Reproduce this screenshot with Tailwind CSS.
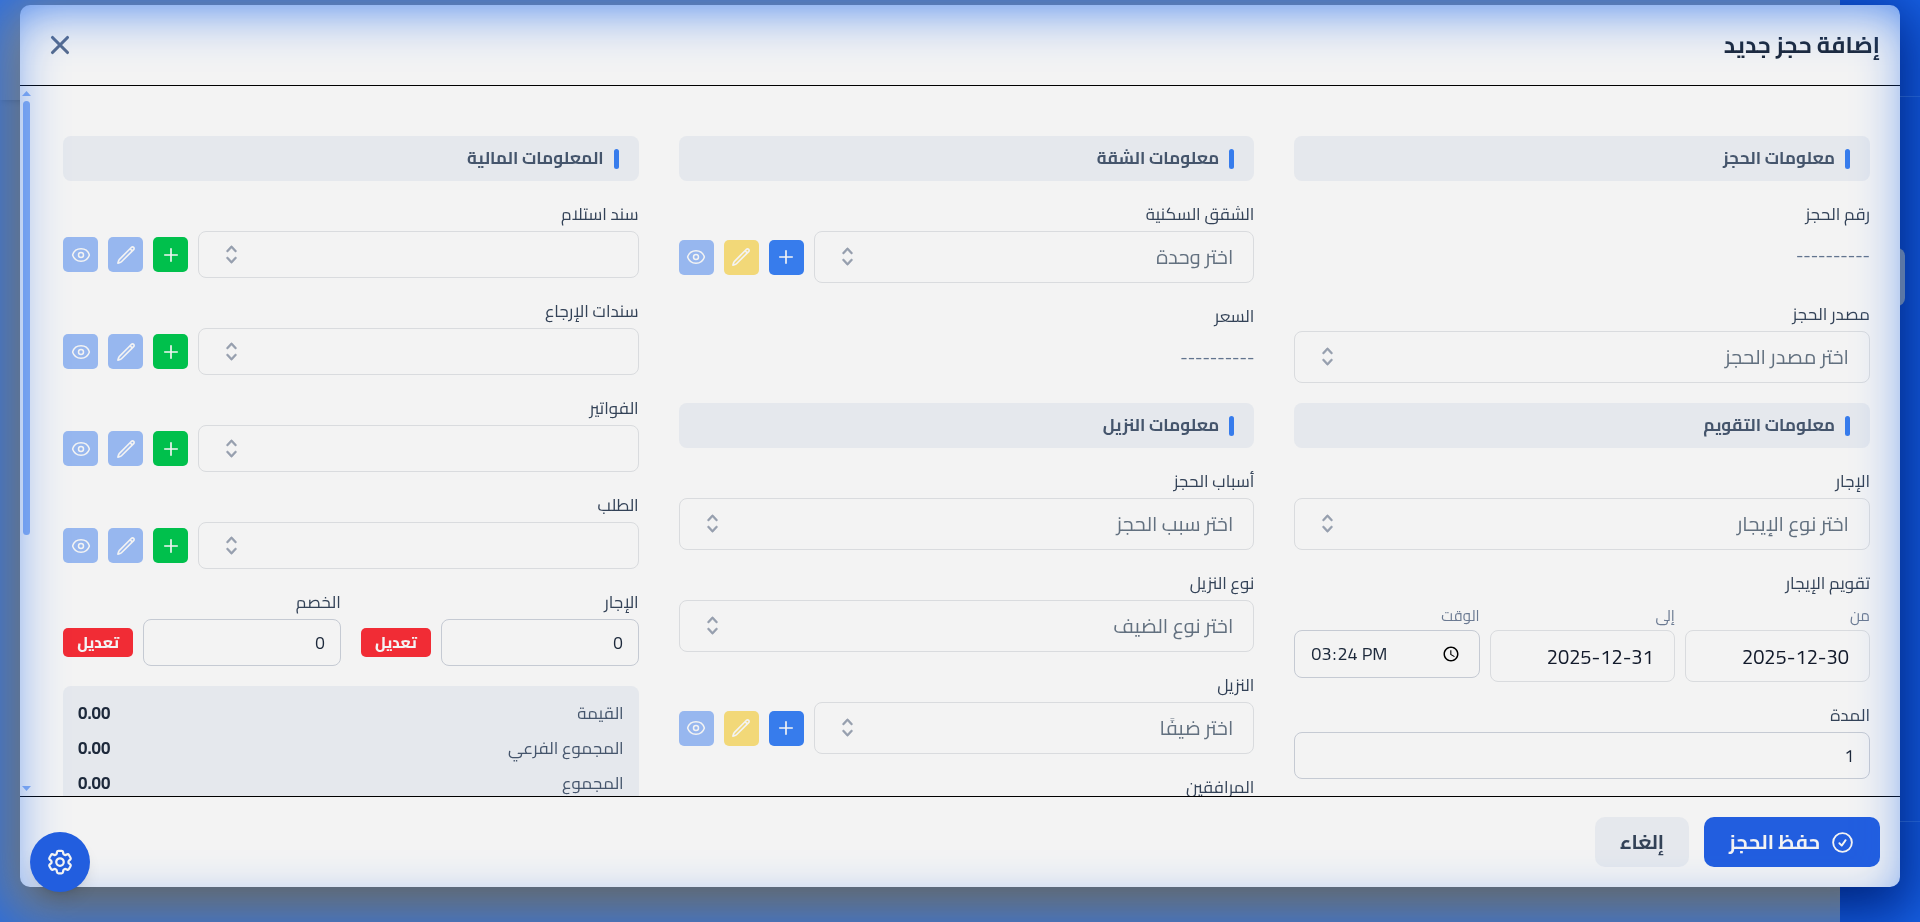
<!DOCTYPE html>
<html lang="ar" dir="rtl">
<head>
  <meta charset="UTF-8" />
  <meta name="viewport" content="width=device-width, initial-scale=1.0" />
  <title>إضافة حجز جديد</title>
  <script src="https://cdn.jsdelivr.net/npm/@tailwindcss/browser@4"></script>
</head>
<body class="bg-[#7b8082] font-['Cairo','Noto_Sans',sans-serif] text-[17px] text-[#1d293b] min-h-screen overflow-hidden">

  <!-- Icons -->
  <svg class="hidden">
    <symbol id="plus" viewBox="0 0 24 24" fill="none" stroke="currentColor" stroke-width="2" stroke-linecap="round" stroke-linejoin="round">
      <path d="M12 4.5v15m7.5-7.5h-15" />
    </symbol>
    <symbol id="pencil" viewBox="0 0 24 24" fill="none" stroke="currentColor" stroke-width="2" stroke-linecap="round" stroke-linejoin="round">
      <path d="m16.862 4.487 1.687-1.688a1.875 1.875 0 1 1 2.652 2.652L6.832 19.82a4.5 4.5 0 0 1-1.897 1.13l-2.685.8.8-2.685a4.5 4.5 0 0 1 1.13-1.897L16.863 4.487Zm0 0L19.5 7.125" />
    </symbol>
    <symbol id="eye" viewBox="0 0 24 24" fill="none" stroke="currentColor" stroke-width="1.8" stroke-linecap="round" stroke-linejoin="round">
      <path d="M2.036 12.322a1.012 1.012 0 0 1 0-.639C3.423 7.51 7.36 4.5 12 4.5c4.638 0 8.573 3.007 9.963 7.178.07.207.07.431 0 .639C20.577 16.49 16.64 19.5 12 19.5c-4.638 0-8.573-3.007-9.963-7.178Z" />
      <path d="M15 12a3 3 0 1 1-6 0 3 3 0 0 1 6 0Z" />
    </symbol>
    <symbol id="chevrons" viewBox="0 0 20 20" fill="currentColor" stroke="currentColor" stroke-width="0.4">
      <path d="M10 3a.75.75 0 0 1 .55.24l3.25 3.5a.75.75 0 1 1-1.1 1.02L10 4.852 7.3 7.76a.75.75 0 0 1-1.1-1.02l3.25-3.5A.75.75 0 0 1 10 3Zm-3.76 9.2a.75.75 0 0 1 1.06.04l2.7 2.908 2.7-2.908a.75.75 0 1 1 1.1 1.02l-3.25 3.5a.75.75 0 0 1-1.1 0l-3.25-3.5a.75.75 0 0 1 .04-1.06Z" />
    </symbol>
  </svg>

  <!-- Page behind the dialog -->
  <div class="fixed inset-0 flex">
    <div class="w-20 bg-[#02309c] flex flex-col justify-between">
      <div class="h-[97px] border-b border-[#2450a8]"></div>
      <div class="h-[101px] border-t border-[#2450a8]"></div>
    </div>
    <div class="flex-1">
      <div class="h-[100px] bg-[#858a8c] shadow-md"></div>
    </div>
  </div>
  <div class="fixed right-[15px] top-[248px] w-10 h-[58px] rounded-lg bg-[#7d8794]"></div>

  <!-- Dialog -->
  <div role="dialog" aria-labelledby="dialogTitle" class="fixed inset-x-5 top-[5px] bottom-[35px] flex flex-col rounded-[10px] bg-[#f3f3f3] shadow-2xl overflow-hidden">

    <div class="h-[81px] shrink-0 flex items-center justify-between px-5 border-b border-black">
      <h2 id="dialogTitle" class="text-[23px] font-bold">إضافة حجز جديد</h2>
      <button aria-label="إغلاق" class="p-[5px] text-[#576b8c]">
        <svg class="size-[30px]" viewBox="0 0 24 24" fill="none" stroke="currentColor" stroke-width="2.5" stroke-linecap="round"><path d="M6 18 18 6M6 6l12 12" /></svg>
      </button>
    </div>

    <div class="flex-1 min-h-0 flex">
      <div class="flex-1 grid grid-cols-3 gap-10 px-[30px] pt-[50px] overflow-hidden">

        <!-- Booking -->
        <div class="flex flex-col gap-5">
          <h3 class="h-[45px] shrink-0 flex items-center gap-[10px] px-5 rounded-lg bg-[#e5e8ed] font-bold text-[#45556c]"><span class="w-[5px] h-5 rounded-full bg-[#377cec]"></span>معلومات الحجز</h3>
          <div>
            <div class="leading-[26px] mb-1 text-[#334257]">رقم الحجز</div>
            <div class="h-[50px] flex items-center text-[#62748e]">----------</div>
          </div>
          <div>
            <label for="source" class="block leading-[26px] mb-1 text-[#334257]">مصدر الحجز</label>
            <div class="relative">
              <select id="source" class="block w-full h-[52px] px-5 appearance-none rounded-lg border border-[#d9dbde] text-xl text-[#62707f]"><option>اختر مصدر الحجز</option></select>
              <svg class="absolute left-[21px] top-[13px] size-[25px] text-[#969fae] pointer-events-none"><use href="#chevrons" /></svg>
            </div>
          </div>

          <h3 class="h-[45px] shrink-0 flex items-center gap-[10px] px-5 rounded-lg bg-[#e5e8ed] font-bold text-[#45556c]"><span class="w-[5px] h-5 rounded-full bg-[#377cec]"></span>معلومات التقويم</h3>
          <div>
            <label for="rentType" class="block leading-[26px] mb-1 text-[#334257]">الإجار</label>
            <div class="relative">
              <select id="rentType" class="block w-full h-[52px] px-5 appearance-none rounded-lg border border-[#d9dbde] text-xl text-[#62707f]"><option>اختر نوع الإيجار</option></select>
              <svg class="absolute left-[21px] top-[13px] size-[25px] text-[#969fae] pointer-events-none"><use href="#chevrons" /></svg>
            </div>
          </div>
          <div>
            <div class="leading-[26px] mb-2 text-[#334257]">تقويم الإيجار</div>
            <div class="grid grid-cols-3 gap-[10px] items-start">
              <div>
                <label for="from" class="block mb-[2px] text-[15px] leading-6 text-[#6b7a92]">من</label>
                <input id="from" type="text" value="2025-12-30" class="block w-full h-[52px] px-5 rounded-lg border border-[#d9dbde] text-xl text-[#121a2b]" />
              </div>
              <div>
                <label for="to" class="block mb-[2px] text-[15px] leading-6 text-[#6b7a92]">إلى</label>
                <input id="to" type="text" value="2025-12-31" class="block w-full h-[52px] px-5 rounded-lg border border-[#d9dbde] text-xl text-[#121a2b]" />
              </div>
              <div>
                <label for="time" class="block mb-[2px] text-[15px] leading-6 text-[#6b7a92]">الوقت</label>
                <input id="time" type="time" value="15:24" class="block w-full h-12 px-[15px] rounded-lg border border-[#c5cad3] text-lg" />
              </div>
            </div>
          </div>
          <div>
            <label for="duration" class="block leading-[26px] mb-1 text-[#334257]">المدة</label>
            <input id="duration" type="text" value="1" class="block w-full h-[47px] px-[15px] rounded-lg border border-[#c5cad3]" />
          </div>
        </div>

        <!-- Apartment and guest -->
        <div class="flex flex-col gap-5">
          <h3 class="h-[45px] shrink-0 flex items-center gap-[10px] px-5 rounded-lg bg-[#e5e8ed] font-bold text-[#45556c]"><span class="w-[5px] h-5 rounded-full bg-[#377cec]"></span>معلومات الشقة</h3>
          <div>
            <label for="unit" class="block leading-[26px] mb-1 text-[#334257]">الشقق السكنية</label>
            <div class="flex items-center gap-[10px]">
              <div class="relative flex-1">
                <select id="unit" class="block w-full h-[52px] px-5 appearance-none rounded-lg border border-[#d9dbde] text-xl text-[#62707f]"><option>اختر وحدة</option></select>
                <svg class="absolute left-[21px] top-[13px] size-[25px] text-[#969fae] pointer-events-none"><use href="#chevrons" /></svg>
              </div>
              <button aria-label="إضافة" class="size-[35px] grid place-items-center rounded-[5px] bg-[#377cec] text-[#f3f3f3]"><svg class="size-5"><use href="#plus" /></svg></button>
              <button aria-label="تعديل" class="size-[35px] grid place-items-center rounded-[5px] bg-[#f2d878] text-[#f3f3f3]"><svg class="size-5"><use href="#pencil" /></svg></button>
              <button aria-label="عرض" class="size-[35px] grid place-items-center rounded-[5px] bg-[#97b7ef] text-[#f3f3f3]"><svg class="size-5"><use href="#eye" /></svg></button>
            </div>
          </div>
          <div>
            <div class="leading-[26px] mb-1 text-[#334257]">السعر</div>
            <div class="h-[50px] flex items-center text-[#62748e]">----------</div>
          </div>

          <h3 class="h-[45px] shrink-0 flex items-center gap-[10px] px-5 rounded-lg bg-[#e5e8ed] font-bold text-[#45556c]"><span class="w-[5px] h-5 rounded-full bg-[#377cec]"></span>معلومات النزيل</h3>
          <div>
            <label for="reason" class="block leading-[26px] mb-1 text-[#334257]">أسباب الحجز</label>
            <div class="relative">
              <select id="reason" class="block w-full h-[52px] px-5 appearance-none rounded-lg border border-[#d9dbde] text-xl text-[#62707f]"><option>اختر سبب الحجز</option></select>
              <svg class="absolute left-[21px] top-[13px] size-[25px] text-[#969fae] pointer-events-none"><use href="#chevrons" /></svg>
            </div>
          </div>
          <div>
            <label for="guestType" class="block leading-[26px] mb-1 text-[#334257]">نوع النزيل</label>
            <div class="relative">
              <select id="guestType" class="block w-full h-[52px] px-5 appearance-none rounded-lg border border-[#d9dbde] text-xl text-[#62707f]"><option>اختر نوع الضيف</option></select>
              <svg class="absolute left-[21px] top-[13px] size-[25px] text-[#969fae] pointer-events-none"><use href="#chevrons" /></svg>
            </div>
          </div>
          <div>
            <label for="guest" class="block leading-[26px] mb-1 text-[#334257]">النزيل</label>
            <div class="flex items-center gap-[10px]">
              <div class="relative flex-1">
                <select id="guest" class="block w-full h-[52px] px-5 appearance-none rounded-lg border border-[#d9dbde] text-xl text-[#62707f]"><option>اختر ضيفًا</option></select>
                <svg class="absolute left-[21px] top-[13px] size-[25px] text-[#969fae] pointer-events-none"><use href="#chevrons" /></svg>
              </div>
              <button aria-label="إضافة" class="size-[35px] grid place-items-center rounded-[5px] bg-[#377cec] text-[#f3f3f3]"><svg class="size-5"><use href="#plus" /></svg></button>
              <button aria-label="تعديل" class="size-[35px] grid place-items-center rounded-[5px] bg-[#f2d878] text-[#f3f3f3]"><svg class="size-5"><use href="#pencil" /></svg></button>
              <button aria-label="عرض" class="size-[35px] grid place-items-center rounded-[5px] bg-[#97b7ef] text-[#f3f3f3]"><svg class="size-5"><use href="#eye" /></svg></button>
            </div>
          </div>
          <div class="leading-[26px] text-[#334257]">المرافقين</div>
        </div>

        <!-- Finance -->
        <div class="flex flex-col gap-5">
          <h3 class="h-[45px] shrink-0 flex items-center gap-[10px] px-5 rounded-lg bg-[#e5e8ed] font-bold text-[#45556c]"><span class="w-[5px] h-5 rounded-full bg-[#377cec]"></span>المعلومات المالية</h3>
          <div>
            <label for="receipt" class="block leading-[26px] mb-1 text-[#334257]">سند استلام</label>
            <div class="flex items-center gap-[10px]">
              <div class="relative flex-1">
                <select id="receipt" class="block w-full h-[47px] px-5 appearance-none rounded-lg border border-[#d9dbde]"><option></option></select>
                <svg class="absolute left-[21px] top-[11px] size-[25px] text-[#969fae] pointer-events-none"><use href="#chevrons" /></svg>
              </div>
              <button aria-label="إضافة" class="size-[35px] grid place-items-center rounded-[5px] bg-[#00c04c] text-[#f3f3f3]"><svg class="size-5"><use href="#plus" /></svg></button>
              <button aria-label="تعديل" class="size-[35px] grid place-items-center rounded-[5px] bg-[#97b7ef] text-[#f3f3f3]"><svg class="size-5"><use href="#pencil" /></svg></button>
              <button aria-label="عرض" class="size-[35px] grid place-items-center rounded-[5px] bg-[#97b7ef] text-[#f3f3f3]"><svg class="size-5"><use href="#eye" /></svg></button>
            </div>
          </div>
          <div>
            <label for="refund" class="block leading-[26px] mb-1 text-[#334257]">سندات الإرجاع</label>
            <div class="flex items-center gap-[10px]">
              <div class="relative flex-1">
                <select id="refund" class="block w-full h-[47px] px-5 appearance-none rounded-lg border border-[#d9dbde]"><option></option></select>
                <svg class="absolute left-[21px] top-[11px] size-[25px] text-[#969fae] pointer-events-none"><use href="#chevrons" /></svg>
              </div>
              <button aria-label="إضافة" class="size-[35px] grid place-items-center rounded-[5px] bg-[#00c04c] text-[#f3f3f3]"><svg class="size-5"><use href="#plus" /></svg></button>
              <button aria-label="تعديل" class="size-[35px] grid place-items-center rounded-[5px] bg-[#97b7ef] text-[#f3f3f3]"><svg class="size-5"><use href="#pencil" /></svg></button>
              <button aria-label="عرض" class="size-[35px] grid place-items-center rounded-[5px] bg-[#97b7ef] text-[#f3f3f3]"><svg class="size-5"><use href="#eye" /></svg></button>
            </div>
          </div>
          <div>
            <label for="invoices" class="block leading-[26px] mb-1 text-[#334257]">الفواتير</label>
            <div class="flex items-center gap-[10px]">
              <div class="relative flex-1">
                <select id="invoices" class="block w-full h-[47px] px-5 appearance-none rounded-lg border border-[#d9dbde]"><option></option></select>
                <svg class="absolute left-[21px] top-[11px] size-[25px] text-[#969fae] pointer-events-none"><use href="#chevrons" /></svg>
              </div>
              <button aria-label="إضافة" class="size-[35px] grid place-items-center rounded-[5px] bg-[#00c04c] text-[#f3f3f3]"><svg class="size-5"><use href="#plus" /></svg></button>
              <button aria-label="تعديل" class="size-[35px] grid place-items-center rounded-[5px] bg-[#97b7ef] text-[#f3f3f3]"><svg class="size-5"><use href="#pencil" /></svg></button>
              <button aria-label="عرض" class="size-[35px] grid place-items-center rounded-[5px] bg-[#97b7ef] text-[#f3f3f3]"><svg class="size-5"><use href="#eye" /></svg></button>
            </div>
          </div>
          <div>
            <label for="order" class="block leading-[26px] mb-1 text-[#334257]">الطلب</label>
            <div class="flex items-center gap-[10px]">
              <div class="relative flex-1">
                <select id="order" class="block w-full h-[47px] px-5 appearance-none rounded-lg border border-[#d9dbde]"><option></option></select>
                <svg class="absolute left-[21px] top-[11px] size-[25px] text-[#969fae] pointer-events-none"><use href="#chevrons" /></svg>
              </div>
              <button aria-label="إضافة" class="size-[35px] grid place-items-center rounded-[5px] bg-[#00c04c] text-[#f3f3f3]"><svg class="size-5"><use href="#plus" /></svg></button>
              <button aria-label="تعديل" class="size-[35px] grid place-items-center rounded-[5px] bg-[#97b7ef] text-[#f3f3f3]"><svg class="size-5"><use href="#pencil" /></svg></button>
              <button aria-label="عرض" class="size-[35px] grid place-items-center rounded-[5px] bg-[#97b7ef] text-[#f3f3f3]"><svg class="size-5"><use href="#eye" /></svg></button>
            </div>
          </div>

          <div class="grid grid-cols-2 gap-5">
            <div>
              <label for="rent" class="block leading-[26px] mb-1 text-[#334257]">الإجار</label>
              <div class="flex items-center gap-[10px]">
                <input id="rent" type="text" value="0" class="flex-1 min-w-0 h-[47px] px-[15px] rounded-lg border border-[#c5cad3]" />
                <button class="w-[70px] h-[29px] rounded-[5px] bg-[#f12c35] text-[#f3f3f3] text-[15px] leading-6 font-extrabold">تعديل</button>
              </div>
            </div>
            <div>
              <label for="discount" class="block leading-[26px] mb-1 text-[#334257]">الخصم</label>
              <div class="flex items-center gap-[10px]">
                <input id="discount" type="text" value="0" class="flex-1 min-w-0 h-[47px] px-[15px] rounded-lg border border-[#c5cad3]" />
                <button class="w-[70px] h-[29px] rounded-[5px] bg-[#f12c35] text-[#f3f3f3] text-[15px] leading-6 font-extrabold">تعديل</button>
              </div>
            </div>
          </div>

          <dl class="flex flex-col gap-[10px] p-[15px] rounded-lg bg-[#e5e8ed] leading-[25px]">
            <div class="flex justify-between"><dt class="text-[#45556c]">القيمة</dt><dd class="font-bold">0.00</dd></div>
            <div class="flex justify-between"><dt class="text-[#45556c]">المجموع الفرعي</dt><dd class="font-bold">0.00</dd></div>
            <div class="flex justify-between"><dt class="text-[#45556c]">المجموع</dt><dd class="font-bold">0.00</dd></div>
          </dl>
        </div>
      </div>

      <!-- Scroll track -->
      <div class="w-[13px] shrink-0 flex flex-col items-center py-[5px] text-[#88adef]">
        <svg class="w-[9px] h-[5px]" viewBox="0 0 9 5" fill="currentColor"><path d="M4.500 0 9 5H0z" /></svg>
        <div class="mt-[5px] w-[7px] h-[62%] rounded-full bg-[#88adef]"></div>
        <svg class="mt-auto w-[9px] h-[5px]" viewBox="0 0 9 5" fill="currentColor"><path d="M0 0h9L4.500 5z" /></svg>
      </div>
    </div>

    <div class="h-[91px] shrink-0 flex items-center gap-[15px] px-5 border-t border-black text-xl font-bold">
      <button class="h-[50px] px-[25px] flex items-center gap-[10px] rounded-[10px] bg-[#225edf] text-[#f3f3f3]">
        <svg class="size-[25px]" viewBox="0 0 24 24" fill="none" stroke="currentColor" stroke-width="1.8" stroke-linecap="round" stroke-linejoin="round"><path d="M9 12.75 11.250 15 15 9.750M21 12a9 9 0 1 1-18 0 9 9 0 0 1 18 0Z" /></svg>
        حفظ الحجز
      </button>
      <button class="h-[50px] px-[25px] rounded-[10px] bg-[#e5e8ed] text-[#334257]">إلغاء</button>
    </div>
  </div>

  <!-- Blue glow round the window -->
  <div class="fixed inset-0 pointer-events-none shadow-[inset_0_0_60px_#1c69ee]"></div>

  <!-- Settings -->
  <button aria-label="الإعدادات" class="fixed left-[30px] bottom-[30px] size-[60px] grid place-items-center rounded-full bg-[#225edf] text-[#f3f3f3] shadow-lg">
    <svg class="size-[30px]" viewBox="0 0 24 24" fill="none" stroke="currentColor" stroke-width="1.8" stroke-linecap="round" stroke-linejoin="round">
      <path d="M9.594 3.940c.09-.542.560-.940 1.110-.940h2.593c.550 0 1.020.398 1.110.940l.213 1.281c.063.374.313.686.645.870.074.040.147.083.220.127.325.196.720.257 1.075.124l1.217-.456a1.125 1.125 0 0 1 1.370.490l1.296 2.247a1.125 1.125 0 0 1-.260 1.431l-1.003.827c-.293.241-.438.613-.430.992a7.723 7.723 0 0 1 0 .255c-.008.378.137.750.430.991l1.004.827c.424.350.534.955.260 1.430l-1.298 2.247a1.125 1.125 0 0 1-1.369.491l-1.217-.456c-.355-.133-.750-.072-1.076.124a6.470 6.470 0 0 1-.220.128c-.331.183-.581.495-.644.869l-.213 1.281c-.090.543-.560.940-1.110.940h-2.594c-.550 0-1.019-.398-1.110-.940l-.213-1.281c-.062-.374-.312-.686-.644-.870a6.520 6.520 0 0 1-.220-.127c-.325-.196-.720-.257-1.076-.124l-1.217.456a1.125 1.125 0 0 1-1.369-.490l-1.297-2.247a1.125 1.125 0 0 1 .260-1.431l1.004-.827c.292-.240.437-.613.430-.991a6.932 6.932 0 0 1 0-.255c.007-.380-.138-.751-.430-.992l-1.004-.827a1.125 1.125 0 0 1-.260-1.430l1.297-2.247a1.125 1.125 0 0 1 1.370-.491l1.216.456c.356.133.751.072 1.076-.124.072-.044.146-.086.220-.128.332-.183.582-.495.644-.869l.214-1.280Z" />
      <path d="M15 12a3 3 0 1 1-6 0 3 3 0 0 1 6 0Z" />
    </svg>
  </button>

</body>
</html>
